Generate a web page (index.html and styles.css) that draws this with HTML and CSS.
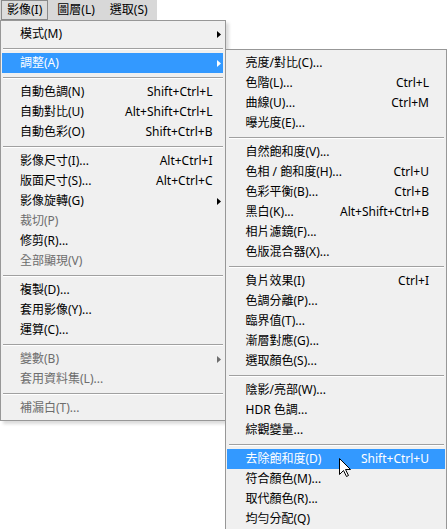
FILE: index.html
```html
<!DOCTYPE html>
<html lang="zh-Hant">
<head>
<meta charset="utf-8">
<title>影像選單</title>
<link rel="stylesheet" href="styles.css">
</head>
<body>
<div class="menubar">
  <span class="mb-item active">影像(I)</span>
  <span class="mb-item">圖層(L)</span>
  <span class="mb-item">選取(S)</span>
</div>
<div class="menus">
  <div class="menu main">
    <div class="item"><span class="label">模式(M)</span><span class="key"></span><span class="arrow-col"><svg class="arrow" width="4" height="7" viewBox="0 0 4 7"><polygon points="0,0 4,3.5 0,7"/></svg></span></div>
    <div class="sep"></div>
    <div class="item hl"><span class="label">調整(A)</span><span class="key"></span><span class="arrow-col"><svg class="arrow" width="4" height="7" viewBox="0 0 4 7"><polygon points="0,0 4,3.5 0,7"/></svg></span></div>
    <div class="sep"></div>
    <div class="item"><span class="label">自動色調(N)</span><span class="key">Shift+Ctrl+L</span><span class="arrow-col"></span></div>
    <div class="item"><span class="label">自動對比(U)</span><span class="key">Alt+Shift+Ctrl+L</span><span class="arrow-col"></span></div>
    <div class="item"><span class="label">自動色彩(O)</span><span class="key">Shift+Ctrl+B</span><span class="arrow-col"></span></div>
    <div class="sep"></div>
    <div class="item"><span class="label">影像尺寸(I)...</span><span class="key">Alt+Ctrl+I</span><span class="arrow-col"></span></div>
    <div class="item"><span class="label">版面尺寸(S)...</span><span class="key">Alt+Ctrl+C</span><span class="arrow-col"></span></div>
    <div class="item"><span class="label">影像旋轉(G)</span><span class="key"></span><span class="arrow-col"><svg class="arrow" width="4" height="7" viewBox="0 0 4 7"><polygon points="0,0 4,3.5 0,7"/></svg></span></div>
    <div class="item off"><span class="label">裁切(P)</span><span class="key"></span><span class="arrow-col"></span></div>
    <div class="item"><span class="label">修剪(R)...</span><span class="key"></span><span class="arrow-col"></span></div>
    <div class="item off"><span class="label">全部顯現(V)</span><span class="key"></span><span class="arrow-col"></span></div>
    <div class="sep"></div>
    <div class="item"><span class="label">複製(D)...</span><span class="key"></span><span class="arrow-col"></span></div>
    <div class="item"><span class="label">套用影像(Y)...</span><span class="key"></span><span class="arrow-col"></span></div>
    <div class="item"><span class="label">運算(C)...</span><span class="key"></span><span class="arrow-col"></span></div>
    <div class="sep"></div>
    <div class="item off"><span class="label">變數(B)</span><span class="key"></span><span class="arrow-col"><svg class="arrow" width="4" height="7" viewBox="0 0 4 7"><polygon points="0,0 4,3.5 0,7"/></svg></span></div>
    <div class="item off"><span class="label">套用資料集(L)...</span><span class="key"></span><span class="arrow-col"></span></div>
    <div class="sep"></div>
    <div class="item off"><span class="label">補漏白(T)...</span><span class="key"></span><span class="arrow-col"></span></div>
  </div>
  <div class="menu submenu">
    <div class="item"><span class="label">亮度/對比(C)...</span><span class="key"></span></div>
    <div class="item"><span class="label">色階(L)...</span><span class="key">Ctrl+L</span></div>
    <div class="item"><span class="label">曲線(U)...</span><span class="key">Ctrl+M</span></div>
    <div class="item"><span class="label">曝光度(E)...</span><span class="key"></span></div>
    <div class="sep"></div>
    <div class="item"><span class="label">自然飽和度(V)...</span><span class="key"></span></div>
    <div class="item"><span class="label">色相 / 飽和度(H)...</span><span class="key">Ctrl+U</span></div>
    <div class="item"><span class="label">色彩平衡(B)...</span><span class="key">Ctrl+B</span></div>
    <div class="item"><span class="label">黑白(K)...</span><span class="key">Alt+Shift+Ctrl+B</span></div>
    <div class="item"><span class="label">相片濾鏡(F)...</span><span class="key"></span></div>
    <div class="item"><span class="label">色版混合器(X)...</span><span class="key"></span></div>
    <div class="sep"></div>
    <div class="item"><span class="label">負片效果(I)</span><span class="key">Ctrl+I</span></div>
    <div class="item"><span class="label">色調分離(P)...</span><span class="key"></span></div>
    <div class="item"><span class="label">臨界值(T)...</span><span class="key"></span></div>
    <div class="item"><span class="label">漸層對應(G)...</span><span class="key"></span></div>
    <div class="item"><span class="label">選取顏色(S)...</span><span class="key"></span></div>
    <div class="sep"></div>
    <div class="item"><span class="label">陰影/亮部(W)...</span><span class="key"></span></div>
    <div class="item"><span class="label">HDR 色調...</span><span class="key"></span></div>
    <div class="item"><span class="label">綜觀變量...</span><span class="key"></span></div>
    <div class="sep"></div>
    <div class="item hl"><span class="label">去除飽和度(D)</span><span class="key">Shift+Ctrl+U</span>
      <svg class="cursor" width="13" height="20" viewBox="0 0 13 20"><path d="M0.5 0.5 V16.5 L4.5 12.5 L7.5 18.5 L9.5 17.5 L6.5 11.5 H11.5 Z" fill="#fff" stroke="#000" stroke-width="1" stroke-linejoin="miter"/></svg>
    </div>
    <div class="item"><span class="label">符合顏色(M)...</span><span class="key"></span></div>
    <div class="item"><span class="label">取代顏色(R)...</span><span class="key"></span></div>
    <div class="item"><span class="label">均勻分配(Q)</span><span class="key"></span></div>
  </div>
</div>
</body>
</html>
```
FILE: styles.css
```css
html, body {
  margin: 0;
  padding: 0;
  overflow: hidden;
  background: #ffffff;
}

body {
  font-family: "Noto Sans", "Noto Sans CJK TC", sans-serif;
  font-size: 12px;
  color: #000;
  width: 447px;
  height: 529px;
}

.menubar {
  display: flex;
  gap: 3px;
  width: 157px;
  height: 20px;
  box-sizing: border-box;
  padding-left: 1px;
  background: #d8d8d8;
}

.mb-item {
  display: flex;
  align-items: center;
  height: 20px;
  box-sizing: border-box;
  padding: 0 5px;
  border: 1px solid transparent;
  line-height: 18px;
  white-space: nowrap;
}

.mb-item.active {
  border-color: #8a8a8a;
  background: #dcdcdc;
}

.menus {
  display: flex;
  align-items: flex-start;
}

.menu {
  box-sizing: border-box;
  background: #f0f0f0;
  border: 1px solid #979797;
}

.main {
  width: 226px;
  padding: 3px 2px 2px 1px;
  box-shadow: 3px 3px 3px rgba(0, 0, 0, 0.14);
}

.submenu {
  width: 223px;
  margin-left: -1px;
  margin-top: 29px;
  padding: 3px 1px 3px 1px;
  box-shadow: 3px 3px 3px rgba(0, 0, 0, 0.14);
}

.item {
  position: relative;
  display: flex;
  align-items: center;
  height: 20px;
  line-height: 20px;
  white-space: nowrap;
}

.main .item {
  padding-left: 18px;
}

.submenu .item {
  padding-left: 19px;
  padding-right: 16px;
}

.label {
  flex: 1;
}

.key {
  text-align: right;
}

.arrow-col {
  width: 10px;
  height: 20px;
  display: flex;
  align-items: center;
}

.arrow {
  margin-left: 4px;
  fill: #000;
}

.item.hl {
  background: #3399ff;
  color: #fff;
}

.item.hl .arrow {
  fill: #fff;
}

.item.off {
  color: #6d6d6d;
}

.item.off .arrow {
  fill: #6d6d6d;
}

.sep {
  margin: 4px 0 3px 1px;
  border-top: 1px solid #a0a0a0;
  border-bottom: 1px solid #ffffff;
}

.submenu .sep {
  margin-left: 2px;
  margin-right: 1px;
}

.cursor {
  position: absolute;
  left: 112px;
  top: 9px;
}
```
